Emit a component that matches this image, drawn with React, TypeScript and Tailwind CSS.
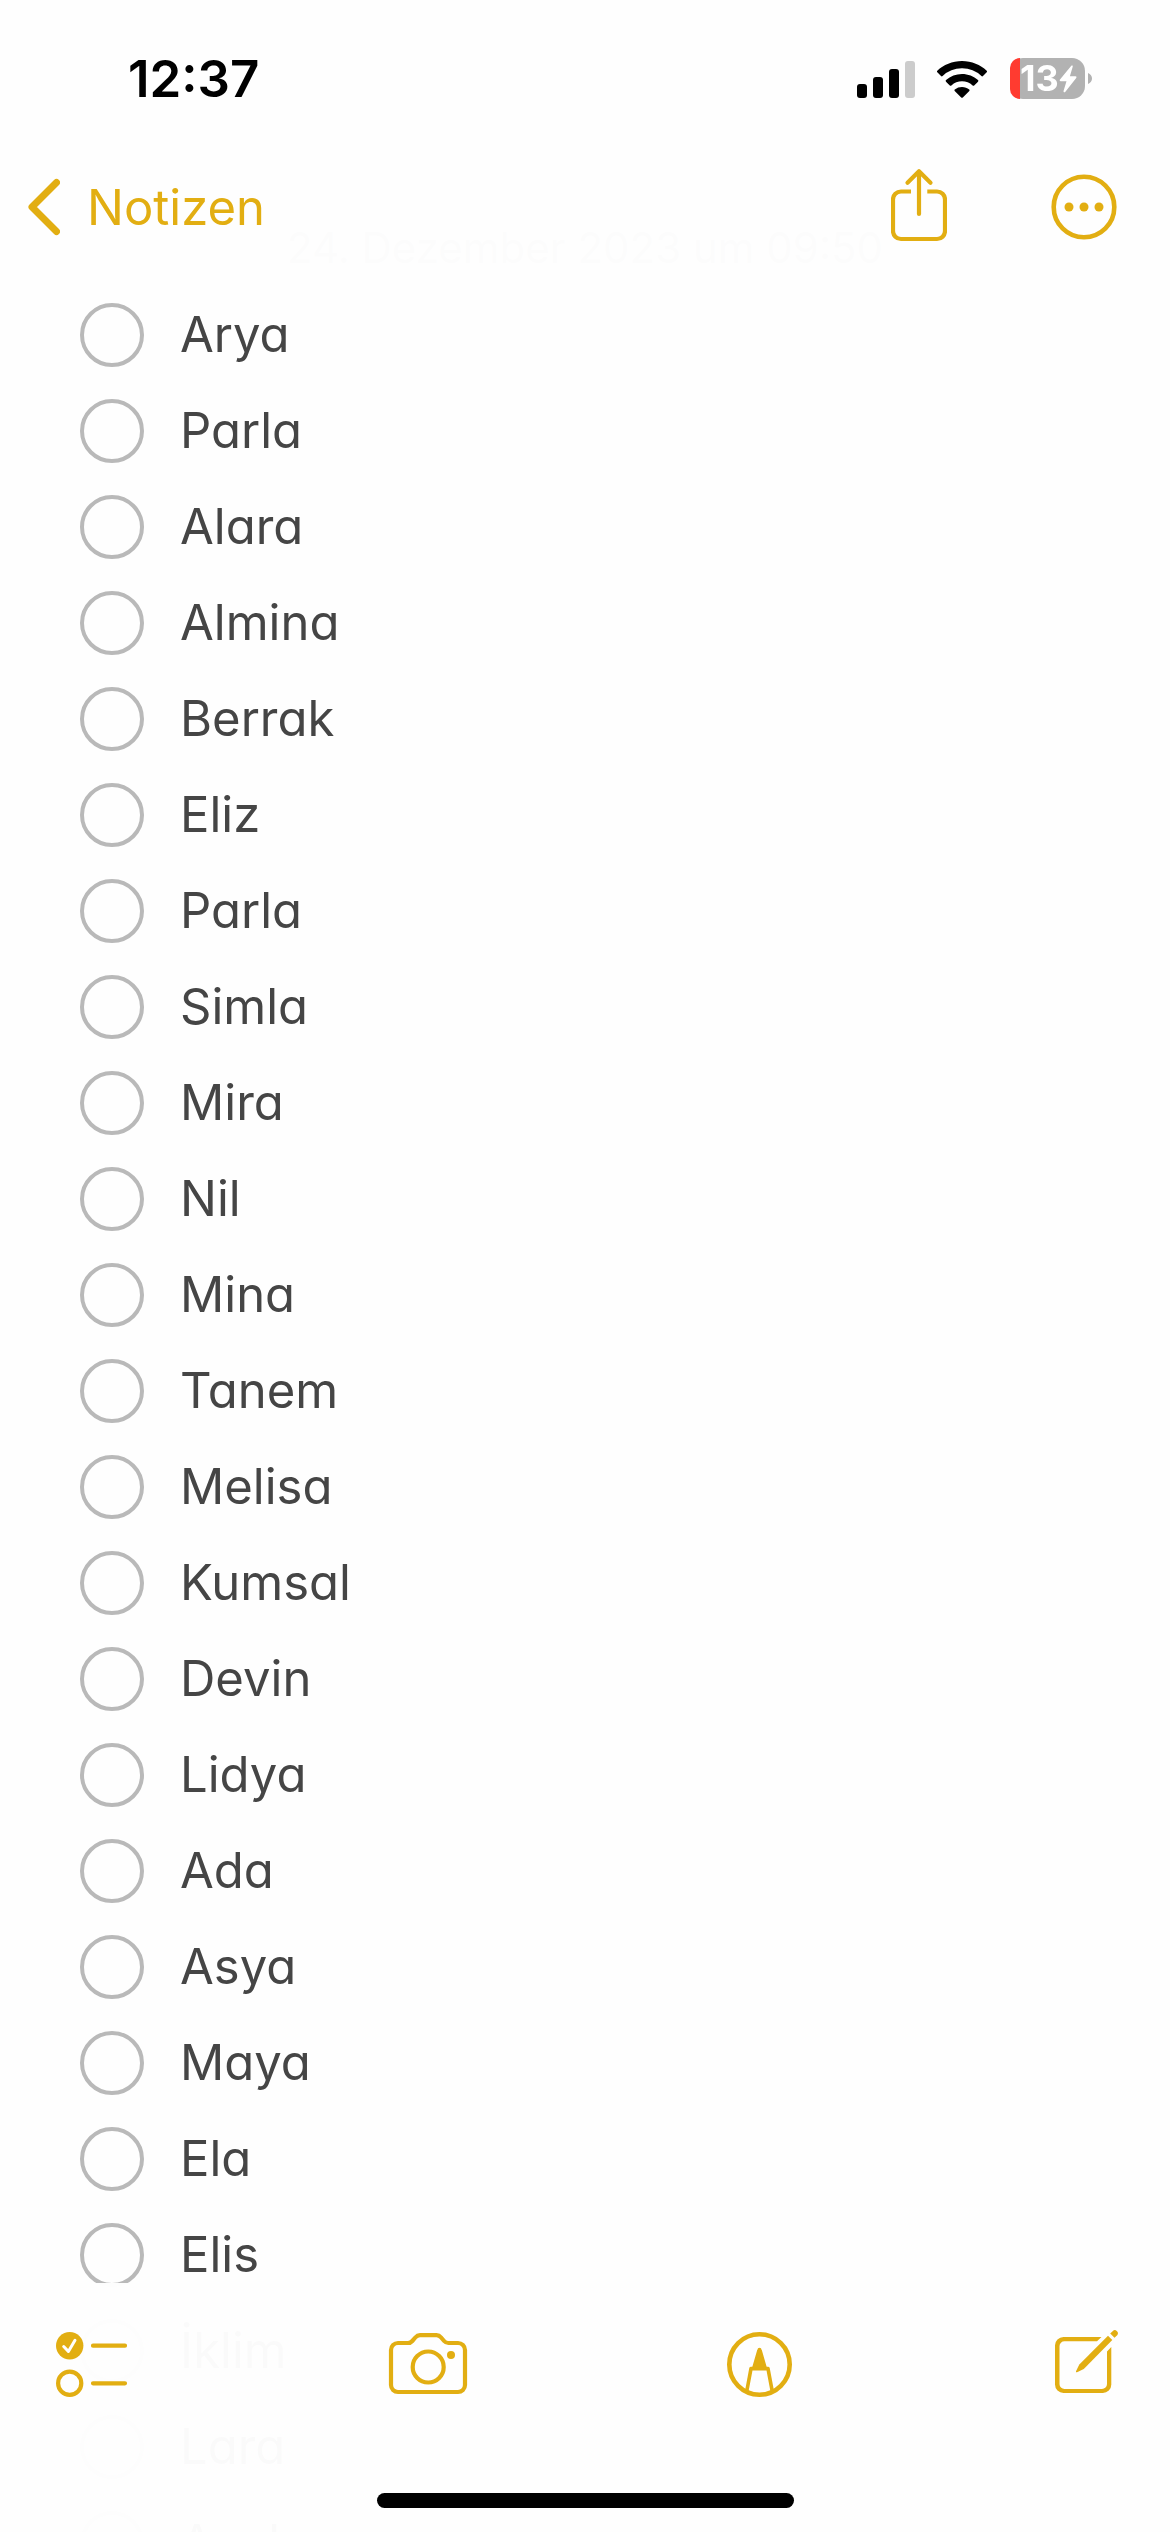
import React from "react";

const names = [
  "Arya",
  "Parla",
  "Alara",
  "Almina",
  "Berrak",
  "Eliz",
  "Parla",
  "Simla",
  "Mira",
  "Nil",
  "Mina",
  "Tanem",
  "Melisa",
  "Kumsal",
  "Devin",
  "Lidya",
  "Ada",
  "Asya",
  "Maya",
  "Ela",
  "Elis",
  "İklim",
  "Lara",
  "Asel",
];

function StatusBar() {
  return (
    <div className="flex h-[141px] items-center justify-between pt-4 pr-[78px] pl-32">
      <span className="text-[51px] leading-none font-semibold text-black">12:37</span>

      <div className="flex items-center">
        {/* Signal */}
        <svg className="h-10 w-[58px]" viewBox="0 0 58 40">
          <rect x="0" y="25" width="10" height="14" rx="3" fill="#000" />
          <rect x="16" y="18" width="10" height="21" rx="3" fill="#000" />
          <rect x="32" y="10" width="10" height="29" rx="3" fill="#000" />
          <rect x="48" y="2" width="10" height="37" rx="3" fill="#ccc" />
        </svg>

        {/* Wifi */}
        <svg className="ml-[22px] h-10 w-[50px]" viewBox="0 0 50 40">
          <path
            d="M25 2C34.700 2 43.500 5.800 49.700 11.700c.5.500.5 1.100 0 1.600L46 17c-.5.500-1.100.5-1.600 0A28 28 0 0 0 25 9.300 28 28 0 0 0 5.600 17c-.5.500-1.100.500-1.600 0L.300 13.300c-.5-.5-.5-1.100 0-1.600C6.500 5.800 15.300 2 25 2Z"
          />
          <path
            d="M25 15c6 0 11.700 2.300 16 6.100.5.500.5 1.100 0 1.600l-3.800 3.700c-.5.500-1 .500-1.600 0A16 16 0 0 0 25 22.300a16 16 0 0 0-10.600 4.100c-.6.500-1.100.500-1.600 0L9 22.700c-.5-.5-.5-1.100 0-1.600A24 24 0 0 1 25 15Z"
          />
          <path d="M25 28c2.800 0 5.300.9 7.200 2.400.5.400.5 1 .1 1.500l-6.500 6.500c-.5.500-1.100.500-1.600 0l-6.500-6.500c-.4-.5-.4-1.100.1-1.500A12 12 0 0 1 25 28Z" />
        </svg>

        {/* Battery */}
        <div className="ml-[23px] flex items-center gap-[3px]">
          <div className="flex h-[41px] w-[75px] items-center rounded-[13px] bg-[#b2b2b2]">
            <div className="h-full w-[10px] shrink-0 rounded-l-[13px] bg-[#ff3b30]" />
            <span className="text-[36px] leading-[41px] font-bold text-white">13</span>
            <svg className="h-7 w-[18px] shrink-0" viewBox="0 0 18 28">
              <path
                d="M12.300.8 1 14.600c-.6.800-.3 1.700.7 1.700h5.800L4.600 25.800c-.5 1.500 1 2 1.800 1L17.200 13c.6-.8.300-1.700-.7-1.700h-5.600L13.700 1.800c.400-1.400-.7-1.800-1.400-1Z"
                fill="#fff"
              />
            </svg>
          </div>
          <svg className="h-[11px] w-1" viewBox="0 0 4 11">
            <path d="M0 0c2.500.9 4 3 4 5.500S2.500 10.100 0 11Z" fill="#b2b2b2" />
          </svg>
        </div>
      </div>
    </div>
  );
}

function NavBar() {
  return (
    <nav className="flex h-[132px] items-center justify-between pr-[53px] pl-7 text-[#e2ae12]">
      <a href="#notizen" className="flex items-center gap-[27px]">
        <svg className="h-[58px] w-8" viewBox="0 0 32 58" fill="none" stroke="currentColor" strokeWidth="7" strokeLinecap="round" strokeLinejoin="round">
          <path d="M28.500 4.500 4 29l24.500 24.500" />
        </svg>
        <span className="text-[49px] leading-none">Notizen</span>
      </a>

      <div className="flex items-center gap-[104px]">
        <button type="button" aria-label="Teilen">
          <svg className="block h-[78px] w-14" viewBox="0 0 56 78" fill="none" stroke="currentColor" strokeWidth="4.200">
            <path d="M20 23.500H10a8 8 0 0 0-8 8v31.500a8 8 0 0 0 8 8h36a8 8 0 0 0 8-8V31.500a8 8 0 0 0-8-8H36.300" />
            <path d="M28 3.500V46M16.500 14.800 28 3.300l11.500 11.500" strokeLinecap="round" strokeLinejoin="round" />
          </svg>
        </button>
        <button type="button" aria-label="Mehr">
          <svg className="block size-[66px]" viewBox="0 0 66 66">
            <circle cx="33" cy="33" r="30.300" fill="none" stroke="currentColor" strokeWidth="4.600" />
            <circle cx="18" cy="33" r="4.500" fill="currentColor" />
            <circle cx="33" cy="33" r="4.500" fill="currentColor" />
            <circle cx="48" cy="33" r="4.500" fill="currentColor" />
          </svg>
        </button>
      </div>
    </nav>
  );
}

function Toolbar() {
  return (
    <div className="flex items-center justify-between pt-[45px] pr-[51px] pl-14 text-[#e2ae12]">
      <button type="button" aria-label="Checkliste">
        <svg className="block h-[72px] w-[72px]" viewBox="0 0 72 72" fill="none" stroke="currentColor" strokeWidth="4.200" strokeLinecap="round">
          <circle cx="13.700" cy="17.700" r="13.700" fill="currentColor" stroke="none" />
          <path d="m7.700 18.500 4.700 5L19 12.300" stroke="#fff" strokeWidth="3" strokeLinejoin="round" />
          <circle cx="13.700" cy="55.300" r="11.600" />
          <path d="M37 17.700h32M37 55.300h32" />
        </svg>
      </button>

      <button type="button" aria-label="Kamera">
        <svg className="block h-[72px] w-20" viewBox="0 0 80 72" fill="none" stroke="currentColor" strokeWidth="4.200" strokeLinejoin="round">
          <path d="M10 15h10c2 0 3-.5 4.300-2l3-3.500C29 7.600 30 7.200 32 7.200h16.500c2 0 3 .4 4.600 2.300l3 3.500c1.300 1.500 2.300 2 4.300 2H70a7 7 0 0 1 7 7v35a7 7 0 0 1-7 7H10a7 7 0 0 1-7-7V22a7 7 0 0 1 7-7Z" />
          <circle cx="40.200" cy="39" r="15.500" />
          <circle cx="63" cy="27" r="4" fill="currentColor" stroke="none" />
        </svg>
      </button>

      <button type="button" aria-label="Markieren">
        <svg className="block h-[72px] w-[68px]" viewBox="0 0 68 72" fill="none" stroke="currentColor">
          <circle cx="32.500" cy="36.500" r="30.200" strokeWidth="4.600" />
          <path d="M19.800 63 24 40.600h17L45.200 63" strokeWidth="3.600" strokeLinejoin="round" />
          <path d="M25.500 41 31 22c.5-2 2.500-2 3 0l5.500 19Z" fill="currentColor" strokeWidth="1.500" />
        </svg>
      </button>

      <button type="button" aria-label="Neue Notiz">
        <svg className="block h-[72px] w-16" viewBox="0 0 64 72" fill="none">
          <path
            d="M46.500 8.900 42 13.200H9.500a5 5 0 0 0-5 5V56a5 5 0 0 0 5 5H47a5 5 0 0 0 5-5V23.500l4.300-4.500V56.500a8.500 8.500 0 0 1-8.500 8.500H8.500A8.500 8.500 0 0 1 0 56.500v-39A8.500 8.500 0 0 1 8.500 8.900Z"
            fill="currentColor"
          />
          <path d="M53 7.700 24.300 36.500 21 43.200c-.3.800.2 1.200 1 1l6.800-3.300L57.300 12Z" fill="currentColor" />
          <path d="m55.200 5.500 2.700-2.600c1.100-1.100 2.700-1.100 3.800 0l.5.600c1 1 1 2.600 0 3.700L59.500 9.800Z" fill="currentColor" />
        </svg>
      </button>
    </div>
  );
}

export default function App() {
  return (
    <div className="h-screen overflow-hidden bg-[#fefefe] font-['Inter','Liberation_Sans',sans-serif]">
      <header className="fixed inset-x-0 top-0 z-10 bg-[#fefefe]/98">
        <StatusBar />
        <NavBar />
      </header>

      <main className="pt-[223px] [font-feature-settings:'cv11']">
        <p className="h-16 text-center text-[42px] leading-[50px] text-[#8a8a8e]">
          24. Dezember 2023 um 09:50
        </p>
        <ul>
          {names.map((name, i) => (
            <li key={i}>
              <label className="flex h-24 items-center gap-9 pl-20 text-[49px] leading-none text-[#454545]">
                <input
                  type="checkbox"
                  className="size-16 shrink-0 appearance-none rounded-full border-4 border-[#b9b9b9] checked:border-[#e2ae12] checked:bg-[#e2ae12]"
                />
                <span className="pb-0.5">{name}</span>
              </label>
            </li>
          ))}
        </ul>
      </main>

      <footer className="fixed inset-x-0 bottom-0 z-10 bg-[#fefefe]/98 pb-6">
        <Toolbar />
        <div className="mx-auto mt-[93px] h-[15px] w-[417px] rounded-full bg-black" />
      </footer>
    </div>
  );
}
